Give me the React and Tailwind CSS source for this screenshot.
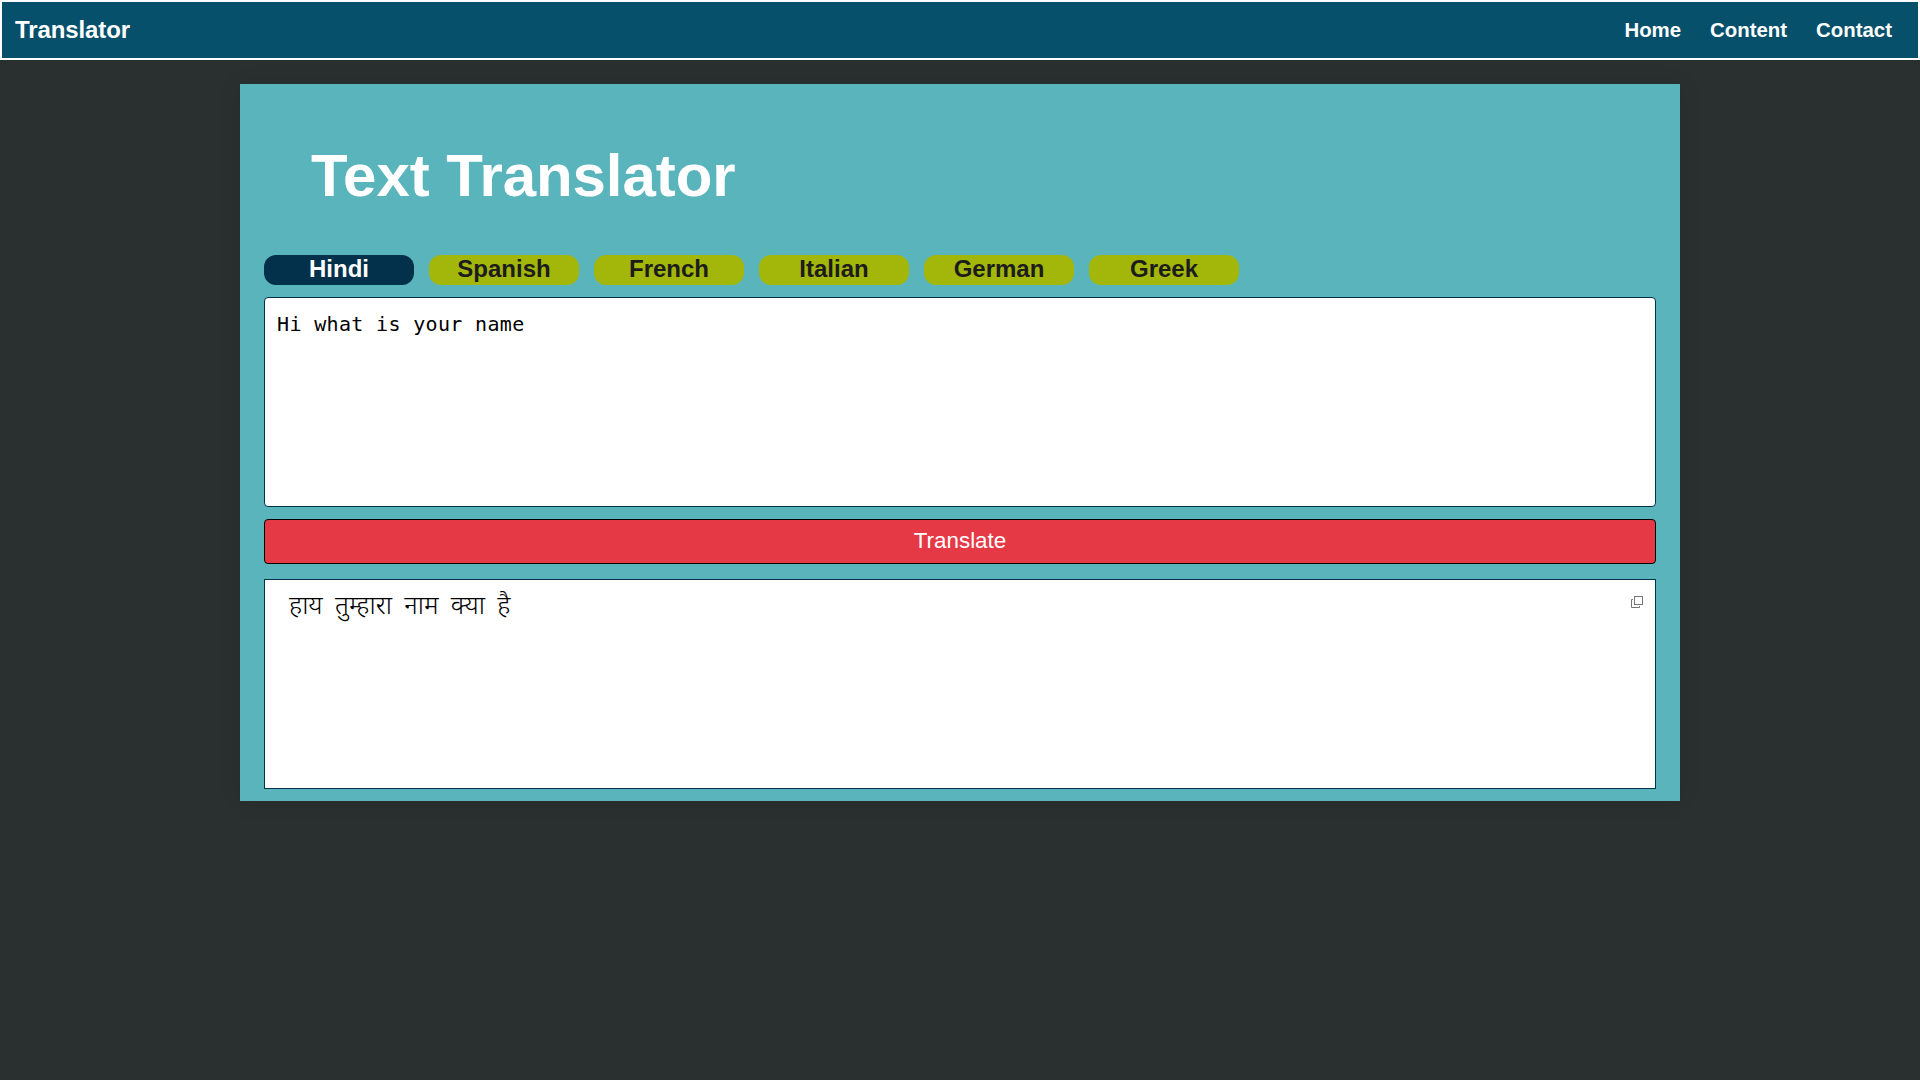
const links = ["Home", "Content", "Contact"];
const languages = ["Hindi", "Spanish", "French", "Italian", "German", "Greek"];

function CopyIcon() {
  return (
    <svg className="h-3 w-3 text-[#757575]" viewBox="0 0 12 12" fill="none" stroke="currentColor" strokeWidth="1">
      <rect x="3.5" y="0.5" width="8" height="8" />
      <path d="M2 3.5H0.5v8h8V10" />
    </svg>
  );
}

export default function App() {
  return (
    <div className="min-h-screen bg-[#2a3030] font-['Liberation_Sans',Arial,sans-serif]">
      <nav className="flex h-[60px] items-center justify-between border-2 border-white bg-[#07506c] pr-[26px] pl-[13px] font-bold text-white">
        <span className="text-[24px] leading-7 tracking-[-0.1px]">Translator</span>
        <div className="flex gap-[29px] text-[20.4px] leading-6">
          {links.map((link) => (
            <a key={link} href="#">{link}</a>
          ))}
        </div>
      </nav>
      <main className="mx-auto mt-6 flex h-[717px] w-[1440px] flex-col bg-[#59b4bc] px-6 shadow-[0_0_20px_rgba(0,0,0,0.1)]">
        <h1 className="mt-[58px] pl-[47px] text-[60px] leading-[68px] font-bold tracking-[-0.08px] text-white">
          Text Translator
        </h1>
        <div className="mt-[45px] flex gap-[15px]">
          {languages.map((language, i) => (
            <button
              key={language}
              className={
                "h-[30px] w-[150px] rounded-[12px] pb-0.5 text-[24px] leading-[28px] font-bold " +
                (i === 0 ? "bg-[#03304a] text-white" : "bg-[#a3b60a] text-[#1c1c1c]")
              }
            >
              {language}
            </button>
          ))}
        </div>
        <textarea
          className="mt-3 block h-[210px] w-full resize-none rounded-[4px] border border-[#03304a] bg-white px-3 py-[13px] font-['DejaVu_Sans_Mono',monospace] text-[20px] leading-[26px] tracking-[0.34px] text-black outline-none"
          defaultValue="Hi what is your name"
          spellCheck={false}
        />
        <button className="mt-3 h-[45px] rounded-[4px] border border-black bg-[#e63946] pb-px text-[22.4px] leading-[26px] text-white">
          Translate
        </button>
        <div className="mt-[15px] flex h-[210px] justify-between border border-[#03304a] bg-white pt-3 pr-3 pl-6 text-black">
          <p className="font-['Noto_Sans_Devanagari','Liberation_Sans',sans-serif] text-[25.8px] leading-[32px] font-light [word-spacing:5.6px]">हाय तुम्हारा नाम क्या है</p>
          <div className="pt-1">
            <CopyIcon />
          </div>
        </div>
      </main>
    </div>
  );
}
